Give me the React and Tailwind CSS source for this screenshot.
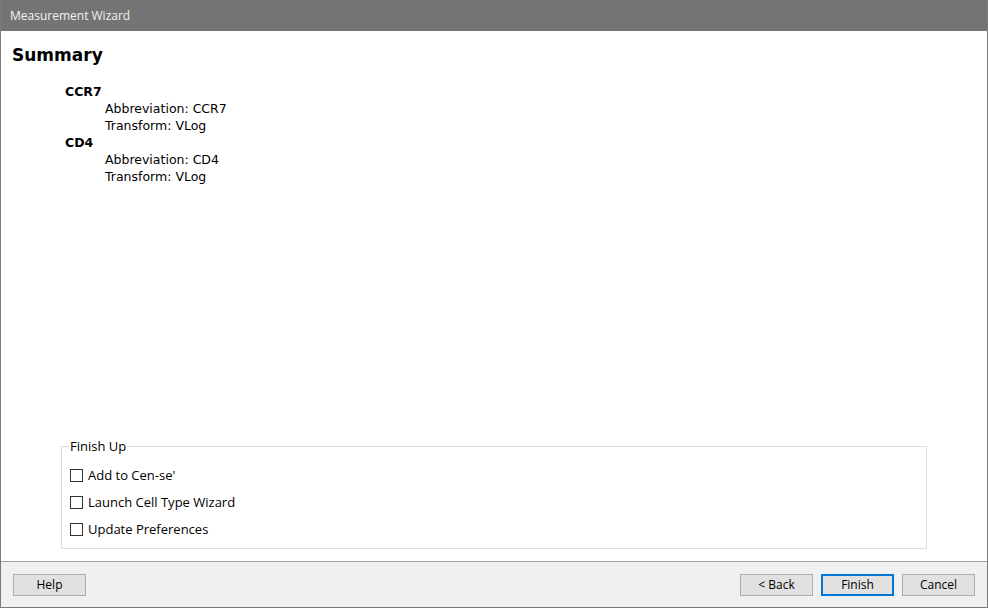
import React from "react";

const Check = ({ label }) => (
  <label className="flex items-center h-[27px] gap-[5px]">
    <span className="w-[13px] h-[13px] border border-[#333] bg-white" />
    <span>{label}</span>
  </label>
);

const Btn = ({ children, primary }) => (
  <button
    className={
      primary
        ? "w-[73px] h-[22px] bg-[#e1e1e1] border-2 border-[#0078d7] text-[12px] text-black"
        : "w-[73px] h-[22px] bg-[#e1e1e1] border border-[#adadad] text-[12px] text-black"
    }
  >
    {children}
  </button>
);

const measures = [
  { name: "CCR7", abbr: "CCR7", transform: "VLog" },
  { name: "CD4", abbr: "CD4", transform: "VLog" },
];

export default function App() {
  return (
    <div
      className="w-[988px] h-[608px] flex flex-col bg-white border-x border-b border-[#7a7a7a] text-black"
      style={{ fontFamily: "Tahoma, 'DejaVu Sans', sans-serif" }}
    >
      <div
        className="h-[31px] bg-[#747474] flex items-center pl-[9px] text-[12px] text-[#f2f2f2] shrink-0"
        style={{ fontFamily: "'Segoe UI', 'Open Sans', sans-serif" }}
      >
        Measurement Wizard
      </div>

      <div className="flex-1 flex flex-col">
        <h1 className="pl-[11px] pt-[13px] text-[17px] font-bold leading-[22px]">Summary</h1>

        <div className="pl-[64px] pt-[17px] text-[12.5px] leading-[17px]">
          {measures.map((m) => (
            <div key={m.name}>
              <div className="font-bold">{m.name}</div>
              <div className="pl-[40px]">Abbreviation: {m.abbr}</div>
              <div className="pl-[40px]">Transform: {m.transform}</div>
            </div>
          ))}
        </div>

        <div className="flex-1" />

        <fieldset
          className="mx-[60px] mb-[12px] border border-[#dcdcdc] px-[8px] pb-[5px] text-[13px]"
          style={{ fontFamily: "'Segoe UI', 'Open Sans', sans-serif" }}
        >
          <legend className="px-[1px] -ml-[1px] leading-[14px]">Finish Up</legend>
          <div className="pt-[9px]">
            <Check label="Add to Cen-se'" />
            <Check label="Launch Cell Type Wizard" />
            <Check label="Update Preferences" />
          </div>
        </fieldset>
      </div>

      <div
        className="h-[46px] shrink-0 bg-[#f0f0f0] border-t border-[#a0a0a0] flex items-center px-[12px] gap-[8px]"
        style={{ fontFamily: "'Segoe UI', 'Open Sans', sans-serif" }}
      >
        <Btn>Help</Btn>
        <div className="flex-1" />
        <Btn>&lt; Back</Btn>
        <Btn primary>Finish</Btn>
        <Btn>Cancel</Btn>
      </div>
    </div>
  );
}
